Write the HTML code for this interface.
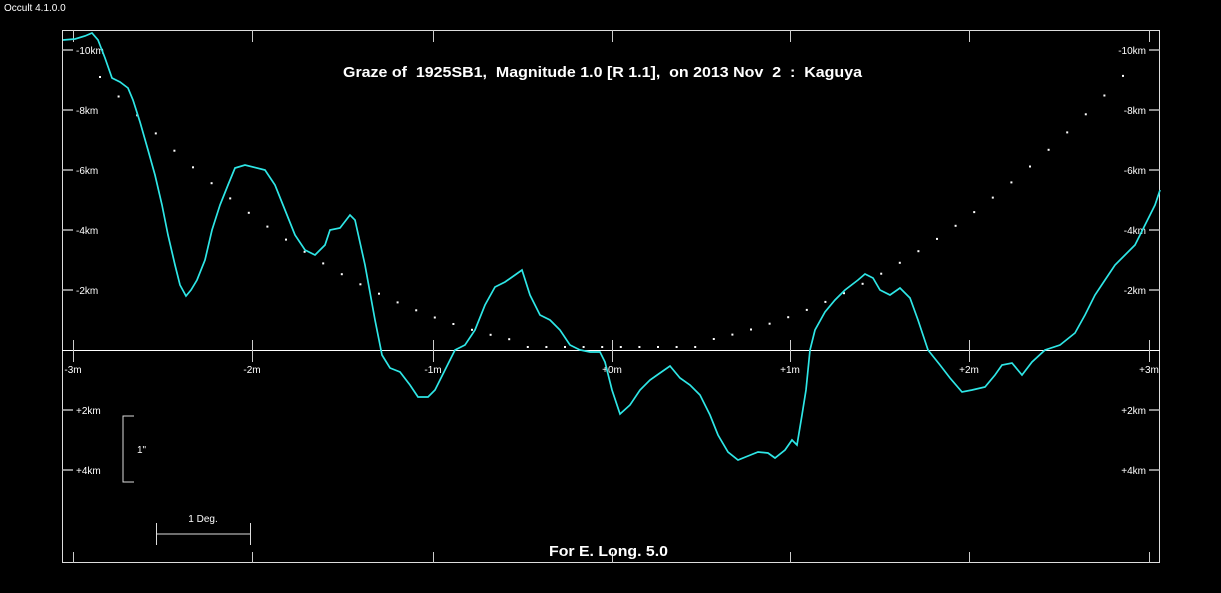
<!DOCTYPE html>
<html><head><meta charset="utf-8"><style>
html,body{margin:0;padding:0;background:#000;width:1221px;height:593px;overflow:hidden}
svg{display:block}
text{font-family:"Liberation Sans",Arial,sans-serif;fill:#fff;white-space:pre}
</style></head><body>
<svg id="s" width="1221" height="593" viewBox="0 0 1221 593" xml:space="preserve">
<text x="4" y="11" font-size="10">Occult 4.1.0.0</text>
<rect x="62.5" y="30.5" width="1097" height="532" fill="none" stroke="#ddd" stroke-width="1"/>
<line x1="62" y1="350.5" x2="1160" y2="350.5" stroke="#fff"/>
<g stroke="#ccc" stroke-width="1">
<line x1="73.5" y1="30" x2="73.5" y2="42"/><line x1="252.5" y1="30" x2="252.5" y2="42"/><line x1="433.5" y1="30" x2="433.5" y2="42"/><line x1="612.5" y1="30" x2="612.5" y2="42"/><line x1="790.5" y1="30" x2="790.5" y2="42"/><line x1="969.5" y1="30" x2="969.5" y2="42"/><line x1="1149.5" y1="30" x2="1149.5" y2="42"/>
<line x1="73.5" y1="340" x2="73.5" y2="362"/><line x1="252.5" y1="340" x2="252.5" y2="362"/><line x1="433.5" y1="340" x2="433.5" y2="362"/><line x1="612.5" y1="340" x2="612.5" y2="362"/><line x1="790.5" y1="340" x2="790.5" y2="362"/><line x1="969.5" y1="340" x2="969.5" y2="362"/><line x1="1149.5" y1="340" x2="1149.5" y2="362"/>
<line x1="73.5" y1="552" x2="73.5" y2="563"/><line x1="252.5" y1="552" x2="252.5" y2="563"/><line x1="433.5" y1="552" x2="433.5" y2="563"/><line x1="612.5" y1="552" x2="612.5" y2="563"/><line x1="790.5" y1="552" x2="790.5" y2="563"/><line x1="969.5" y1="552" x2="969.5" y2="563"/><line x1="1149.5" y1="552" x2="1149.5" y2="563"/>
</g>
<g stroke="#bbb" stroke-width="1.5">
<line x1="62" y1="50" x2="73" y2="50"/><line x1="62" y1="110" x2="73" y2="110"/><line x1="62" y1="170" x2="73" y2="170"/><line x1="62" y1="230" x2="73" y2="230"/><line x1="62" y1="290" x2="73" y2="290"/><line x1="62" y1="410" x2="73" y2="410"/><line x1="62" y1="470" x2="73" y2="470"/>
<line x1="1149" y1="50" x2="1160" y2="50"/><line x1="1149" y1="110" x2="1160" y2="110"/><line x1="1149" y1="170" x2="1160" y2="170"/><line x1="1149" y1="230" x2="1160" y2="230"/><line x1="1149" y1="290" x2="1160" y2="290"/><line x1="1149" y1="410" x2="1160" y2="410"/><line x1="1149" y1="470" x2="1160" y2="470"/>
</g>
<g font-size="10">
<text x="76" y="54">-10km</text><text x="76" y="114">-8km</text><text x="76" y="174">-6km</text><text x="76" y="234">-4km</text><text x="76" y="294">-2km</text><text x="76" y="414">+2km</text><text x="76" y="474">+4km</text>
<g text-anchor="end"><text x="1146" y="54">-10km</text><text x="1146" y="114">-8km</text><text x="1146" y="174">-6km</text><text x="1146" y="234">-4km</text><text x="1146" y="294">-2km</text><text x="1146" y="414">+2km</text><text x="1146" y="474">+4km</text></g>
<g text-anchor="middle"><text x="73" y="373">-3m</text><text x="252" y="373">-2m</text><text x="433" y="373">-1m</text><text x="612" y="373">+0m</text><text x="790" y="373">+1m</text><text x="969" y="373">+2m</text><text x="1149" y="373">+3m</text></g>
<text x="137" y="453">1"</text>
<text x="203" y="522" text-anchor="middle">1 Deg.</text>
</g>
<path d="M134,416H123V482H134" fill="none" stroke="#ddd"/>
<path d="M156.5,523V545M156,534H250M250.5,523V545" fill="none" stroke="#ddd"/>
<text x="343" y="77" font-size="15" font-weight="bold" textLength="519" lengthAdjust="spacingAndGlyphs">Graze of  1925SB1,  Magnitude 1.0 [R 1.1],  on 2013 Nov  2  :  Kaguya</text>
<text x="549" y="556" font-size="15" font-weight="bold" textLength="119" lengthAdjust="spacingAndGlyphs">For E. Long. 5.0</text>
<g id="dots" fill="#fff"></g>
<polyline fill="none" stroke="#2ee6e6" stroke-width="1.7" points="63,40 75,39 85,36 92,33 98,40 105,58 112,78 120,82 128,88 133,100 140,122 148,150 155,175 162,205 168,235 175,265 180,285 186,296 191,290 197,280 205,260 212,230 220,205 228,185 235,168 245,165 265,170 275,185 285,210 295,235 305,250 315,255 325,245 330,230 340,228 350,215 355,220 365,265 375,320 382,355 390,368 400,372 410,385 418,397 428,397 435,390 445,370 455,350 465,345 475,330 485,305 495,287 505,282 515,275 522,270 530,295 540,315 550,320 560,330 570,345 580,350 590,352 600,352 605,362 612,390 620,414 630,405 640,390 650,380 660,373 670,366 680,378 690,385 700,395 710,415 718,435 728,452 738,460 748,456 758,452 768,453 775,458 785,450 792,440 797,445 802,415 806,390 810,350 815,330 825,312 835,300 845,290 858,280 865,274 873,278 880,290 890,295 900,288 910,298 918,320 928,350 940,365 950,378 962,392 972,390 985,387 995,375 1002,365 1012,363 1022,375 1032,362 1045,350 1060,345 1075,333 1085,315 1095,295 1105,280 1115,265 1125,255 1135,245 1145,225 1155,205 1160,190"/>
</svg>
<script>
var g=document.getElementById('dots'),s='';
for(var x=100;x<=1125;x+=18.6){var y=350-273*Math.pow((x-611)/511,2);if(y>340)y=347;
s+='<rect x="'+(x-1).toFixed(1)+'" y="'+(y-1).toFixed(1)+'" width="2" height="2"/>';}
g.innerHTML=s;
</script>
</body></html>
